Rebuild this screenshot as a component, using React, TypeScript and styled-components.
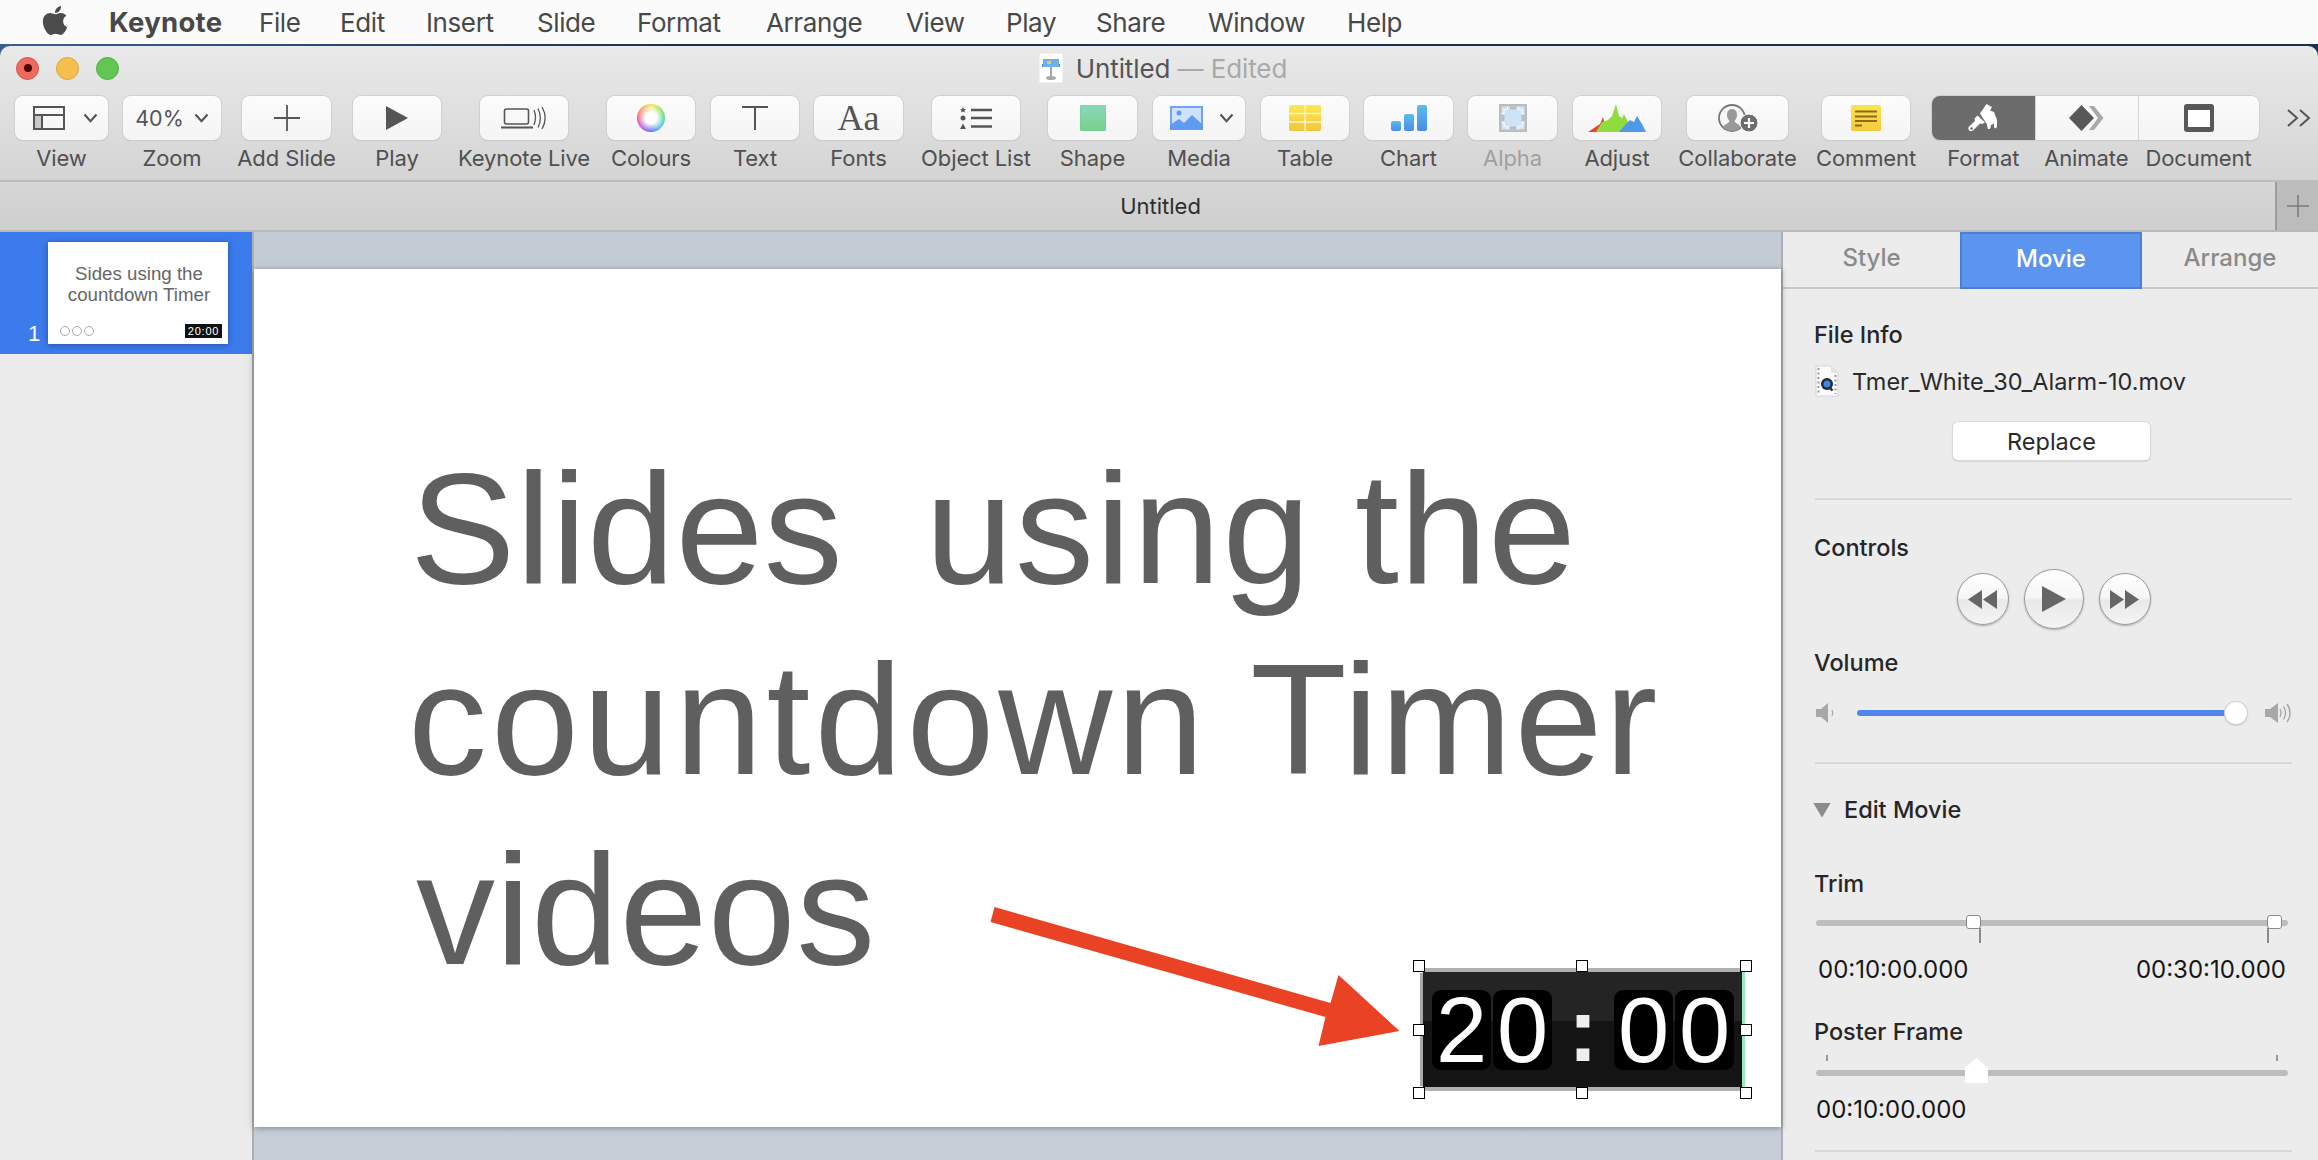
import React from "react";
import styled, { createGlobalStyle } from "styled-components";
import { FaApple } from "react-icons/fa";

const Global = createGlobalStyle`
  html, body { margin: 0; padding: 0; background: #fbfbfb; overflow: hidden; }
  * { box-sizing: border-box; }
  body { font-family: Inter, "Liberation Sans", sans-serif; }
`;

const Screen = styled.div`
  width: 2318px; height: 1160px; display: flex; flex-direction: column; overflow: hidden;
  background: linear-gradient(90deg, #3a5f95, #1c3050 30%, #1c3050);
`;
const MenuBar = styled.div`
  height: 44px; flex: none; display: flex; align-items: center; background: #fbfbfb; color: #484848;
  font-size: 26px; padding-left: 41px;
`;
const AppleMark = styled(FaApple)` width: 28px; height: 33px; color: #4c4c4c; margin-right: 40px; margin-top: -4px; `;
const MenuItem = styled.span<{ $bold?: boolean; $w: number }>`
  width: ${p => p.$w}px; flex: none; font-weight: ${p => (p.$bold ? 700 : 400)}; white-space: nowrap; letter-spacing: ${p => (p.$bold ? "0.3px" : "-0.4px")};
  font-size: ${p => (p.$bold ? "27.5px" : "inherit")};
`;
const WindowFrame = styled.div`
  margin-top: 2px; flex: 1; min-height: 0; display: flex; flex-direction: column; border-radius: 10px 10px 0 0; overflow: hidden;
`;
const Chrome = styled.div`
  flex: none; background: linear-gradient(#eaeaea, #d4d4d4); border-bottom: 2px solid #bdbdbd; height: 136px;
`;
const TitleRow = styled.div`
  height: 50px; display: grid; grid-template-columns: 1fr auto 1fr; align-items: center; padding-bottom: 6px;
`;
const Lights = styled.div` display: flex; gap: 17px; padding-left: 16px; `;
const Light = styled.div<{ $c: string; $b: string }>`
  width: 23px; height: 23px; border-radius: 50%; background: ${p => p.$c}; border: 1px solid ${p => p.$b};
  display: flex; align-items: center; justify-content: center;
`;
const LightDot = styled.div` width: 8px; height: 8px; border-radius: 50%; background: #4a0505; `;
const Title = styled.div`
  display: flex; align-items: center; gap: 13px; font-size: 26px; color: #555; padding-left: 8px; letter-spacing: -0.1px;
`;
const TitleEdited = styled.span` color: #a9a9a9; `;
const Toolbar = styled.div` display: flex; padding-left: 15px; align-items: flex-start; `;
const Tool = styled.div<{ $w: number; $ml: number }>`
  width: ${p => p.$w}px; margin-left: ${p => p.$ml}px; flex: none; display: flex; flex-direction: column; align-items: center;
`;
const ToolButton = styled.div<{ $gap?: number; $pl?: number }>`
  width: 100%; height: 44px; border-radius: 8px; background: linear-gradient(#fcfcfc, #f4f4f4);
  box-shadow: 0 0 0 1px #d0d0d0, 0 1px 1px #b5b5b5; display: flex; align-items: center; justify-content: center;
  gap: ${p => p.$gap ?? 12}px; padding-left: ${p => p.$pl ?? 0}px; color: #555;
`;
const ToolLabel = styled.div<{ $dim?: boolean }>`
  margin-top: 6px; font-size: 22px; line-height: 24px; color: ${p => (p.$dim ? "#a0a0a0" : "#505050")}; white-space: nowrap; letter-spacing: -0.1px;
`;
const ZoomText = styled.span` font-size: 21.5px; color: #555; `;
const FontsGlyph = styled.span` font-family: "Liberation Serif", serif; font-size: 36px; color: #555; line-height: 40px; `;
const ColourWheel = styled.div`
  width: 28px; height: 28px; border-radius: 50%;
  background: radial-gradient(circle, #fff 0 28%, rgba(255,255,255,0) 75%),
    conic-gradient(#f7e24a, #8fe24a, #3fd08f, #3fb8e8, #4a5be0, #b24ad8, #ef4a8a, #f7944a, #f7e24a);
`;
const Segmented = styled.div`
  width: 327px; margin-left: 22px; flex: none;
`;
const SegmentRow = styled.div`
  height: 44px; display: grid; grid-template-columns: 102.5fr 103.5fr 121fr; border-radius: 8px; overflow: hidden;
  box-shadow: 0 0 0 1px #d0d0d0, 0 1px 1px #b5b5b5;
`;
const Segment = styled.div<{ $on?: boolean }>`
  display: flex; align-items: center; justify-content: center;
  background: ${p => (p.$on ? "#6c6c6c" : "linear-gradient(#fbfbfb, #f4f4f4)")};
  & + & { border-left: 1px solid #d4d4d4; }
`;
const SegmentLabels = styled.div` display: grid; grid-template-columns: 102.5fr 103.5fr 121fr; `;
const SegmentLabel = styled(ToolLabel)` text-align: center; `;
const More = styled.div` margin-left: 28px; margin-top: 13px; flex: none; `;
const TabBar = styled.div`
  height: 50px; flex: none; display: flex; background: linear-gradient(#d6d6d6, #cfcfcf); border-bottom: 2px solid #b9b9b9;
`;
const TabTitle = styled.div`
  flex: 1; display: flex; align-items: center; justify-content: center; padding-left: 46px; font-size: 22px; color: #2e2e2e;
`;
const TabPlus = styled.div`
  width: 43px; border-left: 2px solid #9c9c9c; background: #bcbcbc; display: flex; align-items: center; justify-content: center;
`;
const Body = styled.div` flex: 1; min-height: 0; display: flex; `;
const Sidebar = styled.div` width: 254px; flex: none; background: #ebebeb; border-right: 2px solid #aeaeae; `;
const SlideRow = styled.div`
  height: 122px; background: #3b7bec; display: flex; align-items: flex-end; padding: 10px 0 10px 28px;
`;
const SlideNumber = styled.div` width: 20px; font-size: 22px; color: #fff; line-height: 28px; font-family: "Liberation Sans", sans-serif; margin-bottom: -4px; `;
const Thumb = styled.div`
  width: 180px; height: 102px; background: #fff; box-shadow: 0 1px 6px rgba(0,0,40,.35); display: flex; flex-direction: column;
  font-family: "Liberation Sans", sans-serif; color: #666; font-size: 18.7px; line-height: 21px; text-align: center; padding: 21px 0 0 2px; position: relative;
`;
const ThumbFooter = styled.div`
  position: absolute; left: 12px; right: 6px; bottom: 6px; display: flex; align-items: center; justify-content: space-between;
`;
const ThumbDots = styled.div` display: flex; gap: 2px; `;
const ThumbDot = styled.div` width: 10px; height: 10px; border-radius: 50%; border: 1px solid #aaa; `;
const ThumbTimer = styled.div`
  width: 37px; height: 14px; background: #111; color: #fff; font-size: 11px; line-height: 14px; letter-spacing: .8px; text-align: center;
`;
const Canvas = styled.div`
  flex: 1; min-width: 0; background: linear-gradient(#c3cbd5 , #c6ced7); padding-top: 37px;
`;
const Slide = styled.div`
  height: 858px; background: #fff; position: relative; box-shadow: 0 1px 6px rgba(60,70,90,.55);
  font-family: "Liberation Sans", sans-serif; font-size: 158px; line-height: 190.5px; color: #5f5f5f;
  padding: 164px 0 0 153px; white-space: pre;
`;
const SlideLine = styled.div<{ $ml: number }>`
  margin-left: ${p => p.$ml}px; display: flex;
`;
const SlideWord = styled.span<{ $ls: number; $ml?: number }>`
  letter-spacing: ${p => p.$ls}px; margin-left: ${p => p.$ml ?? 0}px;
`;
const Arrow = styled.svg` position: absolute; left: 0; top: 0; width: 100%; height: 100%; pointer-events: none; `;
const Video = styled.div`
  position: absolute; left: 1169px; top: 703px; width: 319px; height: 115px;
  background: linear-gradient(#242424 0 49px, #141414 49px);
  outline: 0; box-shadow: -4px 0 0 -1px #aaa, 3px 0 0 0 #9be8c0, 0 -4px 0 0 #b0b0b0, 0 4px 0 0 #b0b0b0;
  display: flex; align-items: center; padding-left: 9px;
  font-family: "Liberation Sans", sans-serif; color: #fff; white-space: normal;
`;
const Digit = styled.div<{ $ml?: number }>`
  width: 59px; height: 80px; margin-left: ${p => p.$ml ?? 2}px; background: #000; border-radius: 9px; flex: none;
  font-size: 92px; line-height: 80px; text-align: center;
`;
const Colon = styled.div`
  width: 62px; flex: none; text-align: center; font-size: 90px; font-weight: 700; line-height: 80px; color: #eee;
`;
const Handle = styled.div<{ $x: number; $y: number }>`
  position: absolute; left: ${p => p.$x}px; top: ${p => p.$y}px; width: 12px; height: 12px; background: #fff; border: 1.5px solid #000;
`;
const Panel = styled.div` width: 537px; flex: none; background: #ececec; border-left: 2px solid #aeaeae; display: flex; flex-direction: column; `;
const Tabs = styled.div`
  height: 57px; flex: none; display: grid; grid-template-columns: 177px 182px 1fr; border-bottom: 2px solid #c8c8c8; 
`;
const PanelTab = styled.div<{ $on?: boolean }>`
  display: flex; align-items: center; justify-content: center; font-size: 24px; font-weight: 500; padding-bottom: 4px;
  color: ${p => (p.$on ? "#fff" : "#8a8a8a")}; background: ${p => (p.$on ? "#5b95f0" : "transparent")};
  ${p => p.$on && "box-shadow: 0 0 0 2px #4c7fd0 inset; margin-bottom: -2px;"}
`;
const PanelBody = styled.div` padding: 32px 26px 0 32px; display: flex; flex-direction: column; `;
const Heading = styled.div<{ $mt?: number }>`
  font-size: 23.5px; line-height: 28px; font-weight: 500; color: #262626; margin: ${p => p.$mt ?? 0}px 0 0 -1px;
`;
const FileRow = styled.div` display: flex; align-items: center; gap: 13px; height: 32px; margin-top: 16px; font-size: 23.5px; color: #2a2a2a; `;
const ReplaceButton = styled.div`
  width: 197px; height: 38px; margin: 25px 0 0 138px; background: #fff; border-radius: 5px; box-shadow: 0 0 0 1px #d8d8d8, 0 1px 2px #a8a8a8;
  display: flex; align-items: center; justify-content: center; font-size: 23.5px; color: #2a2a2a;
`;
const Divider = styled.div<{ $mt: number }>` height: 2px; background: #d8d8d8; margin-top: ${p => p.$mt}px; flex: none; `;
const Transport = styled.div` height: 60px; margin-top: 7px; display: flex; align-items: center; justify-content: center; gap: 15px; `;
const RoundButton = styled.div<{ $d: number }>`
  width: ${p => p.$d}px; height: ${p => p.$d}px; border-radius: 50%; border: 1px solid #9a9a9a;
  background: linear-gradient(#fff, #f6f6f6 48%, #e8e8e8 52%, #f4f4f4); box-shadow: 0 1px 2px #aaa;
  display: flex; align-items: center; justify-content: center;
`;
const VolumeRow = styled.div` height: 26px; margin-top: 23px; display: flex; align-items: center; margin-left: 1px; `;
const VolumeTrack = styled.div`
  width: 379px; margin: 0 29px 0 22px; height: 6px; border-radius: 3px; background: #5085ee; position: relative;
`;
const VolumeKnob = styled.div`
  position: absolute; right: -11px; top: -8px; width: 22px; height: 22px; border-radius: 50%; background: #fff; box-shadow: 0 0 0 1px #d0d0d0, 0 1px 2px #999;
`;
const Disclosure = styled.div`
  margin-top: 32px; display: flex; align-items: center; gap: 14px; height: 28px; margin-left: -2px;
`;
const DisclosureTriangle = styled.div`
  width: 18px; height: 15px; background: #8c8c8c; clip-path: polygon(0 0, 100% 0, 50% 100%);
`;
const RangeBox = styled.div<{ $mt: number }>` position: relative; height: 28px; margin: ${p => p.$mt}px 0 0 1px; width: 472px; `;
const Track = styled.div<{ $top: number }>`
  position: absolute; left: 0; right: 0; top: ${p => p.$top}px; height: 6px; border-radius: 3px; background: #bdbdbd;
`;
const TrimFlag = styled.div<{ $x: number; $flip?: boolean }>`
  position: absolute; left: ${p => p.$x}px; top: 0; width: 15px; height: 14px; background: #fff; border: 1px solid #8a8a8a; border-radius: 3px;
  &::after {
    content: ""; position: absolute; top: 12px; width: 2px; height: 15px; background: #8a8a8a;
    ${p => (p.$flip ? "left: -1px;" : "right: -1px;")}
  }
`;
const Tick = styled.div<{ $x: number }>` position: absolute; left: ${p => p.$x}px; top: 0; width: 2px; height: 6px; background: #9a9a9a; `;
const PosterKnob = styled.div`
  position: absolute; left: 149px; top: 3px; width: 23px; height: 25px; background: #fff; border-radius: 2px;
  clip-path: polygon(50% 0, 100% 40%, 100% 100%, 0 100%, 0 40%);
`;
const TimeRow = styled.div<{ $pl: number; $pr?: number }>`
  margin-top: 12px; height: 28px; display: flex; justify-content: space-between; align-items: center; font-size: 24px; color: #161616;
  padding: 0 ${p => p.$pr ?? 0}px 0 ${p => p.$pl}px;
`;

const Chevron = () => (
  <svg width="15" height="10" viewBox="0 0 15 10" fill="none"><path d="M1.5 1.5 7.500 8.200l6-6.700" stroke="#555" strokeWidth="2.200" /></svg>
);
const ViewIcon = () => (
  <svg width="32" height="24" viewBox="0 0 32 24" fill="none">
    <rect x="2" y="9" width="7" height="14" fill="#c9c9c9" />
    <rect x="1" y="1" width="30" height="22" stroke="#555" strokeWidth="2" />
    <path d="M1 9h30M9 9v14" stroke="#555" strokeWidth="2" />
  </svg>
);
const PlusIcon = ({ s = 26, c = "#555" }: { s?: number; c?: string }) => (
  <svg width={s} height={s} viewBox="0 0 26 26"><path d="M13 0v26M0 13h26" stroke={c} strokeWidth="1.8" /></svg>
);
const PlayIcon = () => <svg width="22" height="24" viewBox="0 0 22 24"><path d="M0 0l22 12L0 24z" fill="#555" /></svg>;
const LiveIcon = () => (
  <svg width="46" height="22" viewBox="0 0 46 22" fill="none" stroke="#555">
    <rect x="3.5" y="2" width="24" height="15" rx="2" strokeWidth="1.6" />
    <path d="M0 20.5h32" strokeWidth="2" />
    <path d="M33 3c2 5 2 10 0 15M37 1.500c3 6 3 13 0 19M41 0c4 7 4 15 0 22" strokeWidth="1.300" />
  </svg>
);
const TextIcon = () => (
  <svg width="26" height="24" viewBox="0 0 26 24" fill="none" stroke="#555" strokeWidth="2"><path d="M0 1h26M13 1v23" /></svg>
);
const ListIcon = () => (
  <svg width="32" height="22" viewBox="0 0 32 22">
    <path d="M3 0l1 2 2 .2-1.500 1.400.4 2L3 4.600 1.100 5.600l.4-2L0 2.200 2 2z" fill="#555" />
    <circle cx="3" cy="11" r="2.500" fill="#555" />
    <path d="M3 16.500l3 5.500H0z" fill="#555" />
    <path d="M11 3h21M11 11h21M11 19.500h21" stroke="#555" strokeWidth="2.400" />
  </svg>
);
const ShapeIcon = () => (
  <svg width="26" height="26" viewBox="0 0 26 26">
    <defs><linearGradient id="sh" x1="0" y1="0" x2="0" y2="1"><stop offset="0" stopColor="#8ad8bc" /><stop offset="1" stopColor="#78d08a" /></linearGradient></defs>
    <rect width="26" height="26" rx="2" fill="url(#sh)" stroke="#6fc49a" strokeWidth=".6" />
  </svg>
);
const MediaIcon = () => (
  <svg width="33" height="24" viewBox="0 0 33 24">
    <rect width="33" height="24" fill="#6ea4f2" />
    <rect x="2" y="2" width="29" height="20" fill="#cfe2fb" />
    <circle cx="9" cy="7" r="2.500" fill="#5f98ee" />
    <path d="M0 22v-3l9-6 5 4 8-8 11 10v3z" fill="#5f9bf0" />
    <path d="M0 24h33v-3H0z" fill="#5f9bf0" />
  </svg>
);
const TableIcon = () => (
  <svg width="32" height="26" viewBox="0 0 32 26">
    <defs><linearGradient id="tb" x1="0" y1="0" x2="0" y2="1"><stop offset="0" stopColor="#fde74e" /><stop offset="1" stopColor="#f3c53e" /></linearGradient></defs>
    <rect width="32" height="26" rx="2" fill="url(#tb)" />
    <path d="M0 8.500h32M0 17h32M16 0v26" stroke="#fdf6c8" strokeWidth="1.500" />
  </svg>
);
const ChartIcon = () => (
  <svg width="36" height="26" viewBox="0 0 36 26">
    <defs><linearGradient id="ch" x1="0" y1="0" x2="0" y2="1"><stop offset="0" stopColor="#5cbcf2" /><stop offset="1" stopColor="#4a8be8" /></linearGradient></defs>
    <rect x="0" y="16" width="10" height="10" rx="2" fill="url(#ch)" />
    <rect x="13" y="9" width="10" height="17" rx="2" fill="url(#ch)" />
    <rect x="26" y="0" width="10" height="26" rx="2" fill="url(#ch)" />
  </svg>
);
const AlphaIcon = () => (
  <svg width="28" height="28" viewBox="0 0 28 28">
    <rect width="28" height="28" fill="#bcbcbc" />
    <rect x="2.500" y="2.500" width="23" height="23" fill="#cfe3f6" />
    <path d="M8.500 2.500v3H5v4H2.500M19.500 2.500v3H23v4h2.500M8.500 25.500v-3H5v-4H2.500M19.500 25.500v-3H23v-4h2.500" fill="none" stroke="#f4f8fc" strokeWidth="1.200" />
    <path d="M11 2.500h6v3h-6zM11 22.500h6v3h-6zM2.500 11h3v6h-3zM22.500 11h3v6h-3z" fill="#bcbcbc" />
  </svg>
);
const AdjustIcon = () => (
  <svg width="58" height="28" viewBox="0 0 58 28">
    <path d="M0 28l6-4 6-4 3-7 3 11v4z" fill="#e8452c" />
    <path d="M8 28l6-10 6-2 4-4 4-12 3 12 3 2 2-4 4 8 4 6-6 4z" fill="#8fdc3c" />
    <path d="M31 28l7-8 4-4 4 2 3-6 5 8 4 8z" fill="#4f98ea" />
  </svg>
);
const CollabIcon = () => (
  <svg width="40" height="28" viewBox="0 0 40 28">
    <circle cx="14" cy="14" r="13" fill="#f6f6f6" stroke="#777" strokeWidth="1.800" />
    <path d="M14 5c3.500 0 5 3 5 6s-1.500 5-2.500 6c0 2 5 3 6 6-2 3-6 4-8.500 4s-6.500-1-8.500-4c1-3 6-4 6-6-1-1-2.500-3-2.500-6s1.500-6 5-6z" fill="#999" />
    <circle cx="31" cy="19" r="9" fill="#6e6e6e" stroke="#fafafa" strokeWidth="1" />
    <path d="M31 14v10M26 19h10" stroke="#fff" strokeWidth="2.200" />
  </svg>
);
const CommentIcon = () => (
  <svg width="30" height="26" viewBox="0 0 30 26">
    <defs><linearGradient id="cm" x1="0" y1="0" x2="0" y2="1"><stop offset="0" stopColor="#fce44c" /><stop offset="1" stopColor="#f5c93e" /></linearGradient></defs>
    <rect width="30" height="26" rx="1.500" fill="url(#cm)" />
    <path d="M4 6.500h22M4 11.500h22M4 16h22M4 20.500h7" stroke="#8a6a20" strokeWidth="2" />
  </svg>
);
const BrushIcon = () => (
  <svg width="30" height="28" viewBox="0 0 30 28" fill="#fff">
    <path d="M12 9.500L18.500 0l5.500 3-2 3.500 4 1.500 3 8v6c0 3-3 3-3 .5v-3l-3 1.500-.5 2.500c-.5 2.500-3 2-3 0l-.5-3z" />
    <path d="M9.500 11.500l7.500 7-3 1.500-2-.5-6.500 6.500c-2.500 2.500-6 .5-5-2.500l.5-1 6-5.500-.5-2.500z" />
    <circle cx="3.500" cy="24.500" r="1.300" fill="#6c6c6c" />
  </svg>
);
const AnimateIcon = () => (
  <svg width="35" height="26" viewBox="0 0 35 26">
    <path d="M20 1h5l9.500 12L25 25h-5l9-12z" fill="#a9a9a9" />
    <path d="M12.500 0L25 13 12.500 26 0 13z" fill="#585858" />
  </svg>
);
const DocumentIcon = () => (
  <svg width="30" height="28" viewBox="0 0 30 28">
    <rect width="30" height="28" rx="3" fill="#585858" />
    <rect x="4" y="6" width="22" height="17" fill="#fff" />
  </svg>
);
const MoreIcon = () => (
  <svg width="24" height="18" viewBox="0 0 24 18" fill="none" stroke="#555" strokeWidth="2"><path d="M1 1l9 8-9 8M13 1l9 8-9 8" /></svg>
);
const KeynoteDoc = () => (
  <svg width="24" height="30" viewBox="0 0 24 30">
    <rect width="24" height="30" fill="#fff" stroke="#d0d0d0" strokeWidth=".6" />
    <rect x="3" y="11" width="18" height="3" fill="#3a8ae0" />
    <rect x="4" y="6" width="16" height="8" fill="#6faef0" />
    <rect x="8" y="8" width="4" height="3" fill="#f2c84a" />
    <path d="M12 14v10" stroke="#888" strokeWidth="1.500" />
    <ellipse cx="12" cy="25" rx="5" ry="2" fill="#aaa" />
  </svg>
);
const MovieFileIcon = () => (
  <svg width="24" height="32" viewBox="0 0 24 32">
    <path d="M1 1h15l7 7v23H1z" fill="#fbfbfb" stroke="#d4d4d4" />
    <path d="M16 1v7h7z" fill="#e4e4e4" />
    <path d="M3.500 3v26M20.500 10v19" stroke="#9a9a9a" strokeWidth="2" strokeDasharray="2 2.500" />
    <circle cx="12" cy="19" r="6" fill="#1f2a3a" />
    <circle cx="12" cy="19" r="3.500" fill="#3f86e8" />
    <path d="M14 22l3.500 3.500" stroke="#1f2a3a" strokeWidth="2.400" />
  </svg>
);
const RewindIcon = () => <svg width="29" height="19" viewBox="0 0 29 19"><path d="M14 0v19L0 9.500zM29 0v19L15 9.500z" fill="#666" /></svg>;
const ForwardIcon = () => <svg width="29" height="19" viewBox="0 0 29 19"><path d="M0 0v19l14-9.500zM15 0v19l14-9.500z" fill="#666" /></svg>;
const BigPlayIcon = () => <svg width="24" height="26" viewBox="0 0 24 26"><path d="M0 0l24 13L0 26z" fill="#666" /></svg>;
const SpeakerLow = () => (
  <svg width="19" height="20" viewBox="0 0 19 20" fill="none">
    <path d="M0 6h5l7-6v20l-7-6H0z" fill="#a8a8a8" />
    <path d="M16 7c1 2 1 4 0 6" stroke="#a8a8a8" strokeWidth="1.200" />
  </svg>
);
const SpeakerHigh = () => (
  <svg width="26" height="24" viewBox="0 0 26 24" fill="none">
    <path d="M0 8h5l8-6v20l-8-6H0z" fill="#a8a8a8" />
    <path d="M15 8c1.500 3 1.500 5 0 8M18.500 5.500c2.500 4 2.500 9 0 13M22 3c4 5 4 13 0 18" stroke="#a8a8a8" strokeWidth="1.400" />
  </svg>
);

type ToolDef = { label: string; w: number; ml: number; dim?: boolean; gap?: number; pl?: number; icon: React.ReactNode };
const tools: ToolDef[] = [
  { label: "View", w: 93, ml: 0, gap: 18, pl: 8, icon: <><ViewIcon /><Chevron /></> },
  { label: "Zoom", w: 98, ml: 15, gap: 10, icon: <><ZoomText>40%</ZoomText><Chevron /></> },
  { label: "Add Slide", w: 89, ml: 21, icon: <PlusIcon /> },
  { label: "Play", w: 88, ml: 22, icon: <PlayIcon /> },
  { label: "Keynote Live", w: 88, ml: 39, icon: <LiveIcon /> },
  { label: "Colours", w: 88, ml: 39, icon: <ColourWheel /> },
  { label: "Text", w: 88, ml: 16, icon: <TextIcon /> },
  { label: "Fonts", w: 89, ml: 15, icon: <FontsGlyph>Aa</FontsGlyph> },
  { label: "Object List", w: 88, ml: 29, icon: <ListIcon /> },
  { label: "Shape", w: 89, ml: 28, icon: <ShapeIcon /> },
  { label: "Media", w: 92, ml: 16, gap: 16, pl: 6, icon: <><MediaIcon /><Chevron /></> },
  { label: "Table", w: 88, ml: 16, icon: <TableIcon /> },
  { label: "Chart", w: 89, ml: 15, icon: <ChartIcon /> },
  { label: "Alpha", w: 89, ml: 15, dim: true, icon: <AlphaIcon /> },
  { label: "Adjust", w: 88, ml: 16, icon: <AdjustIcon /> },
  { label: "Collaborate", w: 101, ml: 26, icon: <CollabIcon /> },
  { label: "Comment", w: 88, ml: 34, icon: <CommentIcon /> },
];
const menu: [string, number][] = [
  ["File", 81], ["Edit", 86], ["Insert", 111], ["Slide", 100], ["Format", 129], ["Arrange", 140],
  ["View", 100], ["Play", 90], ["Share", 112], ["Window", 139], ["Help", 60],
];
const handles: [number, number][] = [
  [-10, -12], [153, -12], [317, -12], [-10, 52], [317, 52], [-10, 115], [153, 115], [317, 115],
];

export default function App() {
  return (
    <Screen>
      <Global />
      <MenuBar>
        <AppleMark />
        <MenuItem $bold $w={150}>Keynote</MenuItem>
        {menu.map(([m, w]) => <MenuItem key={m} $w={w}>{m}</MenuItem>)}
      </MenuBar>
      <WindowFrame>
        <Chrome>
          <TitleRow>
            <Lights>
              <Light $c="#ee6a5f" $b="#d9534a"><LightDot /></Light>
              <Light $c="#f5bf4f" $b="#dca63c" />
              <Light $c="#62c554" $b="#52ad46" />
            </Lights>
            <Title><KeynoteDoc /><span>Untitled <TitleEdited>— Edited</TitleEdited></span></Title>
            <div />
          </TitleRow>
          <Toolbar>
            {tools.map(t => (
              <Tool key={t.label} $w={t.w} $ml={t.ml}>
                <ToolButton $gap={t.gap} $pl={t.pl}>{t.icon}</ToolButton>
                <ToolLabel $dim={t.dim}>{t.label}</ToolLabel>
              </Tool>
            ))}
            <Segmented>
              <SegmentRow>
                <Segment $on><BrushIcon /></Segment>
                <Segment><AnimateIcon /></Segment>
                <Segment><DocumentIcon /></Segment>
              </SegmentRow>
              <SegmentLabels>
                <SegmentLabel>Format</SegmentLabel>
                <SegmentLabel>Animate</SegmentLabel>
                <SegmentLabel>Document</SegmentLabel>
              </SegmentLabels>
            </Segmented>
            <More><MoreIcon /></More>
          </Toolbar>
        </Chrome>
        <TabBar>
          <TabTitle>Untitled</TabTitle>
          <TabPlus><PlusIcon s={22} c="#7a7a7a" /></TabPlus>
        </TabBar>
        <Body>
          <Sidebar>
            <SlideRow>
              <SlideNumber>1</SlideNumber>
              <Thumb>
                Sides using the<br />countdown Timer
                <ThumbFooter>
                  <ThumbDots><ThumbDot /><ThumbDot /><ThumbDot /></ThumbDots>
                  <ThumbTimer>20:00</ThumbTimer>
                </ThumbFooter>
              </Thumb>
            </SlideRow>
          </Sidebar>
          <Canvas>
            <Slide>
              <SlideLine $ml={3}>
                <SlideWord $ls={0.5}>Slides</SlideWord>
                <SlideWord $ls={1.8} $ml={82}>using</SlideWord>
                <SlideWord $ls={0.6} $ml={43}>the</SlideWord>
              </SlideLine>
              <SlideLine $ml={1}>
                <SlideWord $ls={4}>countdown</SlideWord>
                <SlideWord $ls={2.3} $ml={42}>Timer</SlideWord>
              </SlideLine>
              <SlideLine $ml={9}><SlideWord $ls={0.5}>videos</SlideWord></SlideLine>
              <Arrow viewBox="0 0 1526 858">
                <polygon points="740,638 736,653 1071,748 1064,777 1145,762 1084,706 1076,734" fill="#e94224" />
              </Arrow>
              <Video>
                <Digit $ml={0}>2</Digit>
                <Digit>0</Digit>
                <Colon>:</Colon>
                <Digit $ml={0}>0</Digit>
                <Digit>0</Digit>
                {handles.map(([x, y]) => <Handle key={`${x}-${y}`} $x={x} $y={y} />)}
              </Video>
            </Slide>
          </Canvas>
          <Panel>
            <Tabs>
              <PanelTab>Style</PanelTab>
              <PanelTab $on>Movie</PanelTab>
              <PanelTab>Arrange</PanelTab>
            </Tabs>
            <PanelBody>
              <Heading>File Info</Heading>
              <FileRow><MovieFileIcon />Tmer_White_30_Alarm-10.mov</FileRow>
              <ReplaceButton>Replace</ReplaceButton>
              <Divider $mt={38} />
              <Heading $mt={34}>Controls</Heading>
              <Transport>
                <RoundButton $d={52}><RewindIcon /></RoundButton>
                <RoundButton $d={60}><BigPlayIcon /></RoundButton>
                <RoundButton $d={52}><ForwardIcon /></RoundButton>
              </Transport>
              <Heading $mt={20}>Volume</Heading>
              <VolumeRow>
                <SpeakerLow />
                <VolumeTrack><VolumeKnob /></VolumeTrack>
                <SpeakerHigh />
              </VolumeRow>
              <Divider $mt={36} />
              <Disclosure><DisclosureTriangle /><Heading>Edit Movie</Heading></Disclosure>
              <Heading $mt={46}>Trim</Heading>
              <RangeBox $mt={17}>
                <Track $top={5} />
                <TrimFlag $x={150} />
                <TrimFlag $x={451} $flip />
              </RangeBox>
              <TimeRow $pl={3} $pr={6}><span>00:10:00.000</span><span>00:30:10.000</span></TimeRow>
              <Heading $mt={35}>Poster Frame</Heading>
              <RangeBox $mt={9}>
                <Tick $x={10} />
                <Tick $x={460} />
                <Track $top={15} />
                <PosterKnob />
              </RangeBox>
              <TimeRow $pl={1}><span>00:10:00.000</span></TimeRow>
              <Divider $mt={27} />
            </PanelBody>
          </Panel>
        </Body>
      </WindowFrame>
    </Screen>
  );
}
